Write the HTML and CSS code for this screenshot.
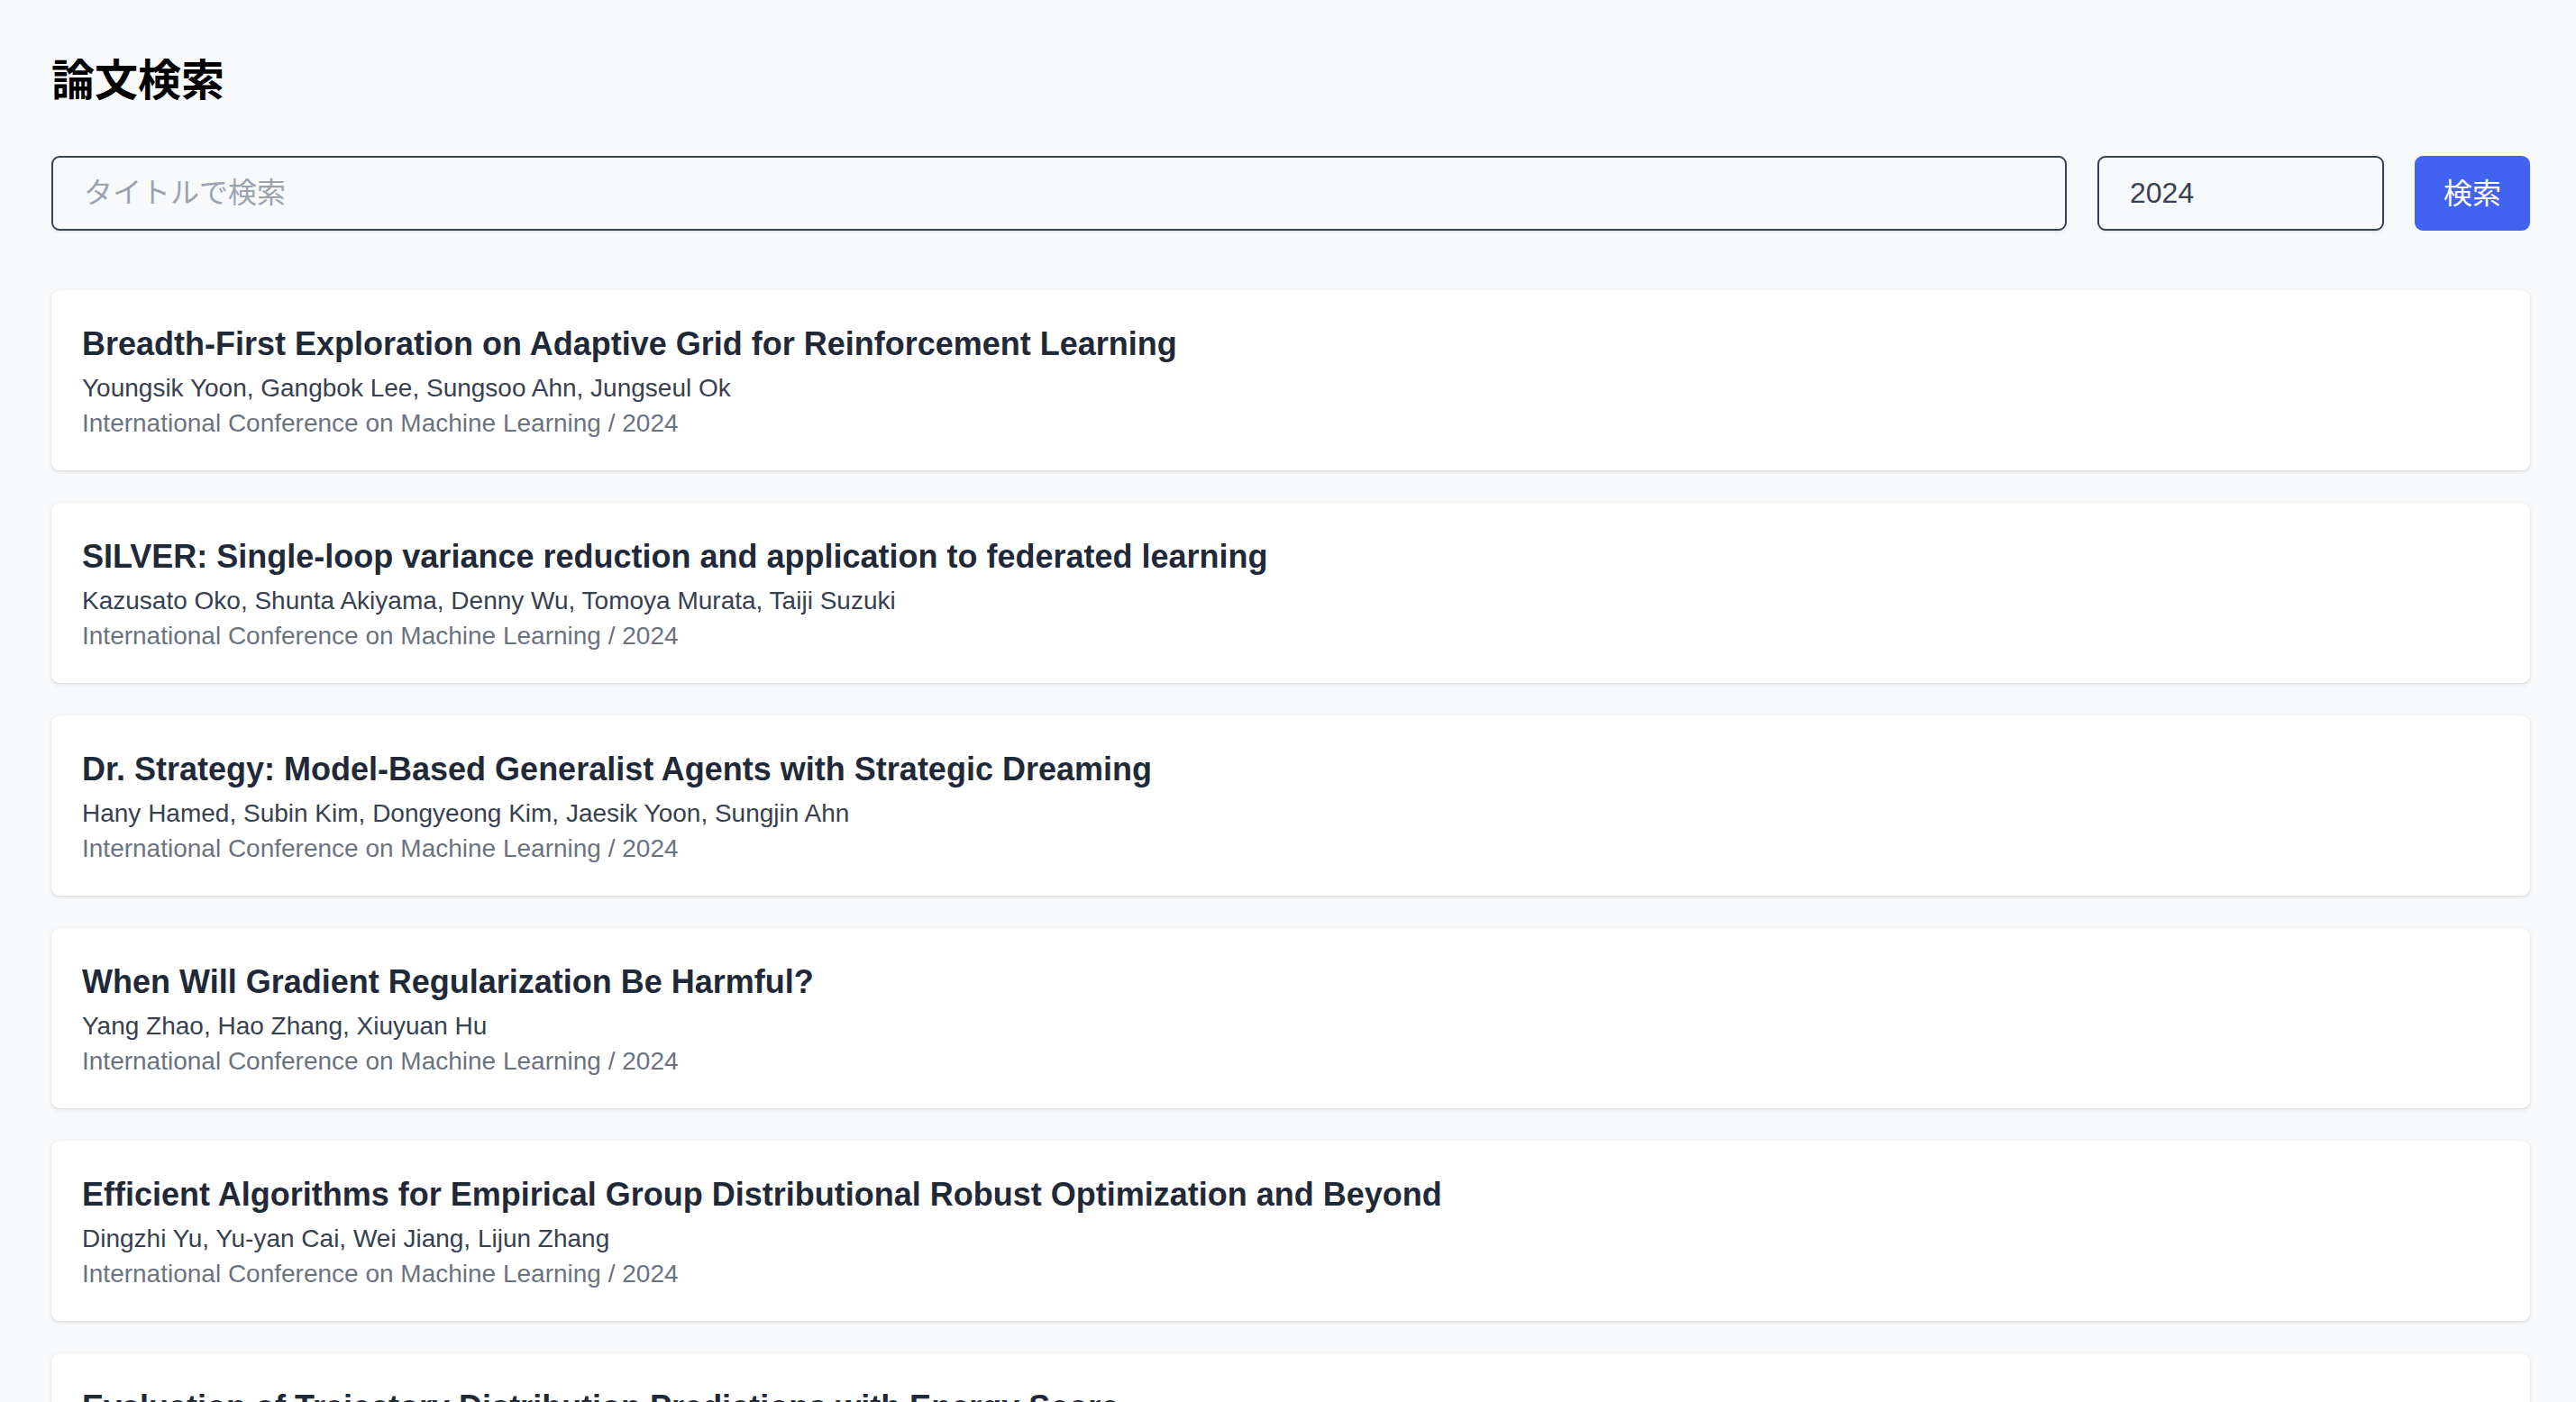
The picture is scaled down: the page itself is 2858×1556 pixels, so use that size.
FILE: index.html
```html
<!DOCTYPE html>
<html lang="ja">
<head>
<meta charset="utf-8">
<title>論文検索</title>
<link rel="stylesheet" href="styles.css">
</head>
<body>
<div class="page">
  <h1 class="page-title">論文検索</h1>
  <form class="search-bar">
    <input class="field field-title" type="text" placeholder="タイトルで検索">
    <input class="field field-year" type="text" value="2024">
    <button class="search-btn" type="button">検索</button>
  </form>
  <div class="results">
    <div class="paper">
      <h2 class="paper-title">Breadth-First Exploration on Adaptive Grid for Reinforcement Learning</h2>
      <p class="paper-authors">Youngsik Yoon, Gangbok Lee, Sungsoo Ahn, Jungseul Ok</p>
      <p class="paper-meta">International Conference on Machine Learning / 2024</p>
    </div>
    <div class="paper">
      <h2 class="paper-title">SILVER: Single-loop variance reduction and application to federated learning</h2>
      <p class="paper-authors">Kazusato Oko, Shunta Akiyama, Denny Wu, Tomoya Murata, Taiji Suzuki</p>
      <p class="paper-meta">International Conference on Machine Learning / 2024</p>
    </div>
    <div class="paper">
      <h2 class="paper-title">Dr. Strategy: Model-Based Generalist Agents with Strategic Dreaming</h2>
      <p class="paper-authors">Hany Hamed, Subin Kim, Dongyeong Kim, Jaesik Yoon, Sungjin Ahn</p>
      <p class="paper-meta">International Conference on Machine Learning / 2024</p>
    </div>
    <div class="paper">
      <h2 class="paper-title">When Will Gradient Regularization Be Harmful?</h2>
      <p class="paper-authors">Yang Zhao, Hao Zhang, Xiuyuan Hu</p>
      <p class="paper-meta">International Conference on Machine Learning / 2024</p>
    </div>
    <div class="paper">
      <h2 class="paper-title">Efficient Algorithms for Empirical Group Distributional Robust Optimization and Beyond</h2>
      <p class="paper-authors">Dingzhi Yu, Yu-yan Cai, Wei Jiang, Lijun Zhang</p>
      <p class="paper-meta">International Conference on Machine Learning / 2024</p>
    </div>
    <div class="paper">
      <h2 class="paper-title">Evaluation of Trajectory Distribution Predictions with Energy Score</h2>
      <p class="paper-authors">Novin Shahroudi, Mihkel Lepson, Meelis Kull</p>
      <p class="paper-meta">International Conference on Machine Learning / 2024</p>
    </div>
  </div>
</div>
</body>
</html>
```
FILE: styles.css
```css
html, body {
  margin: 0;
  padding: 0;
}
body {
  background: #f8f9fb;
  font-family: "Liberation Sans", "Noto Sans CJK JP", sans-serif;
  color: #111827;
}
.page {
  padding: 61px 51px 0 57px;
}
.page-title {
  margin: 0;
  font-family: "Liberation Sans", "Noto Sans CJK JP", sans-serif;
  font-size: 48px;
  font-weight: 700;
  line-height: 58px;
  color: #000;
}
.search-bar {
  display: flex;
  gap: 34px;
  margin: 54px 0 0;
}
.field {
  box-sizing: border-box;
  height: 83px;
  border: 2px solid #374151;
  border-radius: 9px;
  background: #f8f9fb;
  padding: 0 34px;
  font-family: "Liberation Sans", "Noto Sans CJK JP", sans-serif;
  font-size: 32px;
  color: #374151;
  box-shadow: 0 1.5px 3px rgba(0, 0, 0, 0.08);
  outline: none;
}
.field::placeholder {
  color: #9ca3af;
}
.field-title {
  flex: 1;
  min-width: 0;
}
.field-year {
  width: 318px;
  flex: none;
}
.search-btn {
  flex: none;
  width: 128px;
  height: 83px;
  border: none;
  border-radius: 9px;
  background: #4263ef;
  color: #fff;
  font-family: "Noto Sans CJK JP", sans-serif;
  font-size: 32px;
  line-height: 1;
  padding: 0 0 6px;
}
.results {
  margin-top: 66px;
  display: flex;
  flex-direction: column;
  gap: 36px;
}
.paper {
  box-sizing: border-box;
  height: 200px;
  background: #fff;
  border-radius: 9px;
  padding: 34px 34px 32px;
  box-shadow: 0 1.5px 4px rgba(0, 0, 0, 0.1), 0 0 1.5px rgba(0, 0, 0, 0.08);
}
.paper-title {
  margin: 0 0 3px;
  font-size: 36px;
  font-weight: 700;
  line-height: 52px;
  color: #1f2937;
}
.paper-authors {
  margin: 0;
  font-size: 28px;
  line-height: 39px;
  color: #374151;
}
.paper-meta {
  margin: 0;
  font-size: 28px;
  line-height: 39px;
  color: #6b7280;
}
```
